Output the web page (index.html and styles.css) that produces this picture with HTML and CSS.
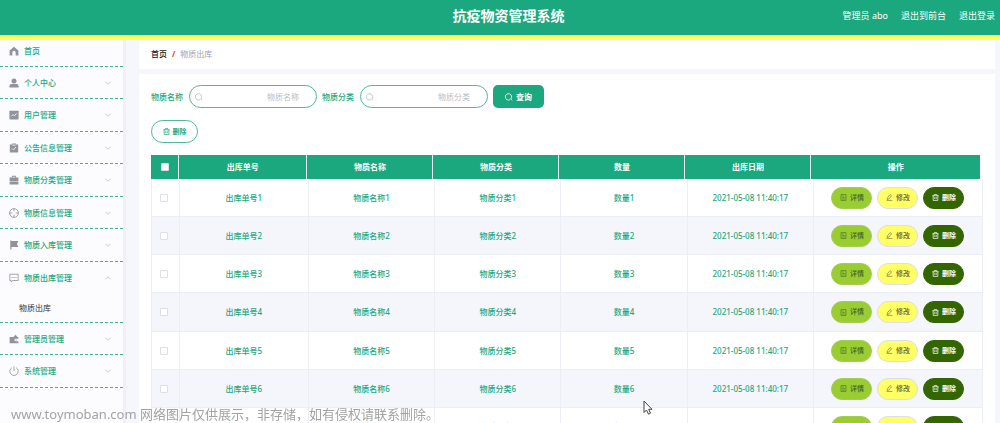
FILE: index.html
```html
<!DOCTYPE html>
<html lang="zh-CN">
<head>
<meta charset="utf-8">
<title>抗疫物资管理系统</title>
<link rel="stylesheet" href="styles.css">
</head>
<body>
<svg class="sprite" aria-hidden="true">
  <symbol id="i-home" viewBox="0 0 24 24"><path fill="currentColor" d="M12 2 1.500 11v11.500H8V15.500a4 4 0 0 1 8 0v7h6.500V11z"/></symbol>
  <symbol id="i-user" viewBox="0 0 24 24"><circle cx="12" cy="7" r="6" fill="currentColor"/><path fill="currentColor" d="M1 22.500v-3q0-5 5-5h12q5 0 5 5v3z"/></symbol>
  <symbol id="i-chart" viewBox="0 0 24 24"><rect x="1" y="1.500" width="22" height="21" rx="1.500" fill="currentColor"/><path d="m6 15 4-4 3 3 5-6" fill="none" stroke="#fcfcfe" stroke-width="2"/></symbol>
  <symbol id="i-claim" viewBox="0 0 24 24"><path fill="currentColor" d="M2 3.500h5V1h10v2.500h5V23H2z"/><path d="m7 13 3.500 3.500L17 9.500M8 5h8" fill="none" stroke="#fcfcfe" stroke-width="2"/></symbol>
  <symbol id="i-case" viewBox="0 0 24 24"><path fill="currentColor" d="M7 6V2h10v4h5.500v9h-21V6zm2 0h6V4H9zM1.500 16h21v6.500h-21z"/></symbol>
  <symbol id="i-aim" viewBox="0 0 24 24"><g fill="none" stroke="currentColor" stroke-width="2"><circle cx="12" cy="12" r="10.500"/><path d="M12 1.500V8m0 8v6.500M1.500 12H8m8 0h6.500"/></g></symbol>
  <symbol id="i-flag" viewBox="0 0 24 24"><path fill="currentColor" d="M3 1h3v1.500h16.500L19 9.500l3.500 7.500H6v6H3z"/></symbol>
  <symbol id="i-chat" viewBox="0 0 24 24"><path d="M2 3h20v15H9l-4 3.500V18H2z" fill="none" stroke="currentColor" stroke-width="2"/><path fill="currentColor" d="M6 9.500h2.500V12H6zm4.800 0h2.500V12h-2.500zm4.800 0H18V12h-2.500z"/></symbol>
  <symbol id="i-wallet" viewBox="0 0 24 24"><path fill="currentColor" d="M1.500 7h9L16 2l4 5h2.500v4.500H16a3 3 0 0 0 0 6h6.500V22h-21z"/><circle cx="17" cy="14.500" r="1.500" fill="currentColor"/></symbol>
  <symbol id="i-power" viewBox="0 0 24 24"><path d="M7 4a10 10 0 1 0 10 0M12 1v11" fill="none" stroke="currentColor" stroke-width="2"/></symbol>
  <symbol id="i-down" viewBox="0 0 24 24"><path d="m2 7 10 10L22 7" fill="none" stroke="currentColor" stroke-width="3"/></symbol>
  <symbol id="i-search" viewBox="0 0 24 24"><path d="M17.500 18A9.500 9.500 0 1 0 15 20M16.500 17l4.500 5" fill="none" stroke="currentColor" stroke-width="2.500"/></symbol>
  <symbol id="i-trash" viewBox="0 0 24 24"><path d="M1 6h22M7.500 6V2h9v4M4 6v16h16V6M9.500 10.500v7m5-7v7" fill="none" stroke="currentColor" stroke-width="2.500"/></symbol>
  <symbol id="i-doc" viewBox="0 0 24 24"><path d="M3.500 2h17v20h-17zM8 7h5m-5 5h8m-8 5h8" fill="none" stroke="currentColor" stroke-width="2"/></symbol>
  <symbol id="i-edit" viewBox="0 0 24 24"><path d="m5 13 9-11 5 4-9 11-6 2zM2 22h20" fill="none" stroke="currentColor" stroke-width="2"/></symbol>
</svg>

<header class="topbar">
  <h1 class="topbar-title">抗疫物资管理系统</h1>
  <nav class="topbar-links">
    <span>管理员 abo</span>
    <a href="#front">退出到前台</a>
    <a href="#logout">退出登录</a>
  </nav>
</header>

<div class="layout">
  <aside class="sidebar">
    <ul class="menu">
      <li class="menu-home"><button class="menu-item"><svg class="icon"><use href="#i-home"/></svg>首页</button></li>
      <li><button class="menu-item"><svg class="icon"><use href="#i-user"/></svg>个人中心<svg class="arrow"><use href="#i-down"/></svg></button></li>
      <li><button class="menu-item"><svg class="icon"><use href="#i-chart"/></svg>用户管理<svg class="arrow"><use href="#i-down"/></svg></button></li>
      <li><button class="menu-item"><svg class="icon"><use href="#i-claim"/></svg>公告信息管理<svg class="arrow"><use href="#i-down"/></svg></button></li>
      <li><button class="menu-item"><svg class="icon"><use href="#i-case"/></svg>物质分类管理<svg class="arrow"><use href="#i-down"/></svg></button></li>
      <li><button class="menu-item"><svg class="icon"><use href="#i-aim"/></svg>物质信息管理<svg class="arrow"><use href="#i-down"/></svg></button></li>
      <li><button class="menu-item"><svg class="icon"><use href="#i-flag"/></svg>物质入库管理<svg class="arrow"><use href="#i-down"/></svg></button></li>
      <li class="menu-open"><button class="menu-item" aria-expanded="true"><svg class="icon"><use href="#i-chat"/></svg>物质出库管理<svg class="arrow"><use href="#i-down"/></svg></button>
        <a class="submenu" href="#out">物质出库</a></li>
      <li><button class="menu-item"><svg class="icon"><use href="#i-wallet"/></svg>管理员管理<svg class="arrow"><use href="#i-down"/></svg></button></li>
      <li><button class="menu-item"><svg class="icon"><use href="#i-power"/></svg>系统管理<svg class="arrow"><use href="#i-down"/></svg></button></li>
    </ul>
  </aside>

  <main class="main">
    <nav class="breadcrumb"><a href="#home">首页</a><span class="slash">/</span><span class="current">物质出库</span></nav>
    <section class="panel">
      <form class="search">
        <label for="name">物质名称</label>
        <span class="field"><svg class="icon-sm"><use href="#i-search"/></svg><input id="name" type="text" placeholder="物质名称"></span>
        <label for="kind">物质分类</label>
        <span class="field"><svg class="icon-sm"><use href="#i-search"/></svg><input id="kind" type="text" placeholder="物质分类"></span>
        <button class="query" type="button"><svg class="icon-sm"><use href="#i-search"/></svg>查询</button>
      </form>
      <button class="remove" type="button"><svg class="icon-xs"><use href="#i-trash"/></svg>删除</button>

      <div class="grid-head">
        <table>
          <colgroup><col class="c-check"><col class="c-no"><col class="c-mid"><col class="c-mid"><col class="c-mid"><col class="c-mid"><col></colgroup>
          <thead><tr><th><input type="checkbox" aria-label="全选"></th><th>出库单号</th><th>物质名称</th><th>物质分类</th><th>数量</th><th>出库日期</th><th>操作</th></tr></thead>
        </table>
      </div>
      <table class="grid-body">
        <colgroup><col class="c-check"><col class="c-no"><col class="c-mid"><col class="c-mid"><col class="c-mid"><col class="c-mid"><col></colgroup>
        <tbody id="rows"></tbody>
      </table>
    </section>
  </main>
</div>

<p class="watermark">www.toymoban.com 网络图片仅供展示，非存储，如有侵权请联系删除。</p>
<svg class="pointer" viewBox="0 0 10 15" aria-hidden="true"><path d="M1 1v11.500L3.500 10l2 4.200 2-1L5.700 9.300H9z" fill="#fff" stroke="#444" stroke-width="1"/></svg>
<script src="app.js"></script>
</body>
</html>
```

FILE: styles.css
```css
* { box-sizing: border-box; }

body {
  display: flex;
  flex-direction: column;
  height: 100vh;
  margin: 0;
  overflow: hidden;
  background: #f6f7fc;
  color: #1ba87e;
  font: 8px/12px "Noto Sans", "Noto Sans CJK SC", sans-serif;
}

button, input {
  margin: 0;
  padding: 0;
  border: 0;
  background: none;
  color: inherit;
  font: inherit;
}

a { color: inherit; text-decoration: none; }
.sprite { display: none; }
.icon { width: 10px; height: 10px; color: #909399; }
.icon-sm { width: 8px; height: 8px; }
.icon-xs { width: 7px; height: 7px; }

.topbar {
  display: grid;
  grid-template-columns: 1fr auto 1fr;
  align-items: center;
  flex: none;
  height: 40px;
  padding: 0 5px 4px 22px;
  border-bottom: 5px solid #ffff5c;
  background: #1ba87e;
  color: #fff;
}

.topbar-title {
  grid-column: 2;
  margin: 0;
  font-size: 14px;
  line-height: 20px;
}

.topbar-links {
  display: flex;
  justify-content: flex-end;
  gap: 13px;
  font-size: 9px;
}

.layout { display: flex; flex: 1; min-height: 0; }

.sidebar {
  flex: none;
  width: 126px;
  border-right: 3px solid #f1f0f4;
  background: #fcfcfe;
}

.menu { margin: 0; padding: 0; list-style: none; }
.menu li { border-bottom: 1px dashed #3fb392; }

.menu-item {
  display: flex;
  align-items: center;
  gap: 5px;
  width: 100%;
  height: 31px;
  padding: 0 12px 0 9px;
  font-weight: 500;
}

.menu li:nth-child(odd) .menu-item { height: 32px; }
.menu li.menu-home .menu-item { height: 26px; padding-bottom: 4px; }
.menu li.menu-open .menu-item { height: 32px; }
.menu li.menu-open + li .menu-item { height: 31px; }
.menu li:last-child .menu-item { height: 32px; }
.arrow { width: 6px; height: 6px; margin-left: auto; color: #b4b8bf; }
.menu-item[aria-expanded="true"] .arrow { transform: rotate(180deg); }

.submenu {
  display: block;
  padding: 8px 0 8px 19px;
  color: #303133;
}

.main {
  display: flex;
  flex: 1;
  flex-direction: column;
  gap: 5px;
  min-width: 0;
  padding: 0 5px 0 13px;
}

.breadcrumb {
  display: flex;
  flex: none;
  align-items: center;
  gap: 5px;
  height: 29px;
  padding: 0 12px 2px;
  background: #fff;
}

.breadcrumb a { color: #222; font-weight: 500; }
.slash { color: #d9452b; font-weight: 700; }
.current { color: #9aa3b8; }

.panel { flex: 1; min-height: 0; padding: 11px 12px 0; background: #fff; }

.search { display: flex; align-items: center; gap: 6px; }
.search label { font-weight: 500; }

.field {
  display: flex;
  align-items: center;
  width: 128px;
  height: 23px;
  margin-right: -1px;
  padding: 0 17px 0 5px;
  border: 1px solid #4fb99a;
  border-radius: 12px;
  color: #b8bcc6;
}

.field input { flex: 1; min-width: 0; outline: 0; text-align: right; }
.field input::placeholder { color: #b8bcc6; opacity: 1; }

.query, .remove, .op {
  display: inline-flex;
  align-items: center;
  justify-content: center;
  gap: 3px;
}

.query {
  width: 51px;
  height: 23px;
  border-radius: 5px;
  background: #1ba87e;
  color: #fff;
  font-weight: 700;
}

.remove {
  display: flex;
  width: 47px;
  height: 23px;
  margin: 12px 0;
  border: 1px solid #4fb99a;
  border-radius: 12px;
  font-size: 7px;
  font-weight: 700;
}

table { width: 100%; border-collapse: separate; border-spacing: 0; table-layout: fixed; }
.c-check { width: 28px; }
.c-no { width: 15.5%; }
.c-mid { width: 15.2%; }
th, td { padding: 0; border-right: 1px solid #ebeef5; text-align: center; }

.grid-head { padding-right: 3px; }
th { height: 24px; background: #1ba87e; color: #fff; font-weight: 700; }
th:last-child { border-right: 0; }

.grid-body { border-left: 1px solid #ebeef5; }
td { height: 38px; border-bottom: 1px solid #ebeef5; font-weight: 500; }
tr:nth-child(4n) td { height: 39px; }
tr:nth-child(even) td { background: #f5f5fc; }

input[type="checkbox"] {
  display: block;
  width: 8px;
  height: 8px;
  margin: 0 auto;
  border: 1px solid #dcdfe6;
  border-radius: 1px;
  background: #fff;
  appearance: none;
}

td input[type="checkbox"] { margin-left: 8px; }

.ops { display: flex; justify-content: center; gap: 5px; }

.op {
  width: 41px;
  height: 22px;
  border: 1px solid #dcdfe6;
  border-radius: 11px;
  font-size: 7px;
}

.op-view { border-color: #a5cc55; background: #9acd32; color: #40602a; }
.op-edit { background: #ffff66; color: #62623c; }
.op-delete { border-color: #336600; background: #336600; color: #fff; font-weight: 700; }

.watermark {
  position: fixed;
  bottom: 0;
  left: 11px;
  margin: 0;
  color: #a3a3a3;
  font-size: 13px;
  line-height: 18px;
}

.pointer { position: fixed; top: 400px; left: 643px; width: 10px; height: 15px; }
```

FILE: app.js
```js
const op = (kind, icon, text) =>
  `<button type="button" class="op op-${kind}"><svg class="icon-xs"><use href="#i-${icon}"/></svg>${text}</button>`;

document.getElementById("rows").innerHTML = [1, 2, 3, 4, 5, 6, 7].map((n) => `
  <tr>
    <td><input type="checkbox" aria-label="选择${n}"></td>
    <td>出库单号${n}</td>
    <td>物质名称${n}</td>
    <td>物质分类${n}</td>
    <td>数量${n}</td>
    <td>2021-05-08 11:40:17</td>
    <td><div class="ops">${op("view", "doc", "详情")}${op("edit", "edit", "修改")}${op("delete", "trash", "删除")}</div></td>
  </tr>`).join("");
```
